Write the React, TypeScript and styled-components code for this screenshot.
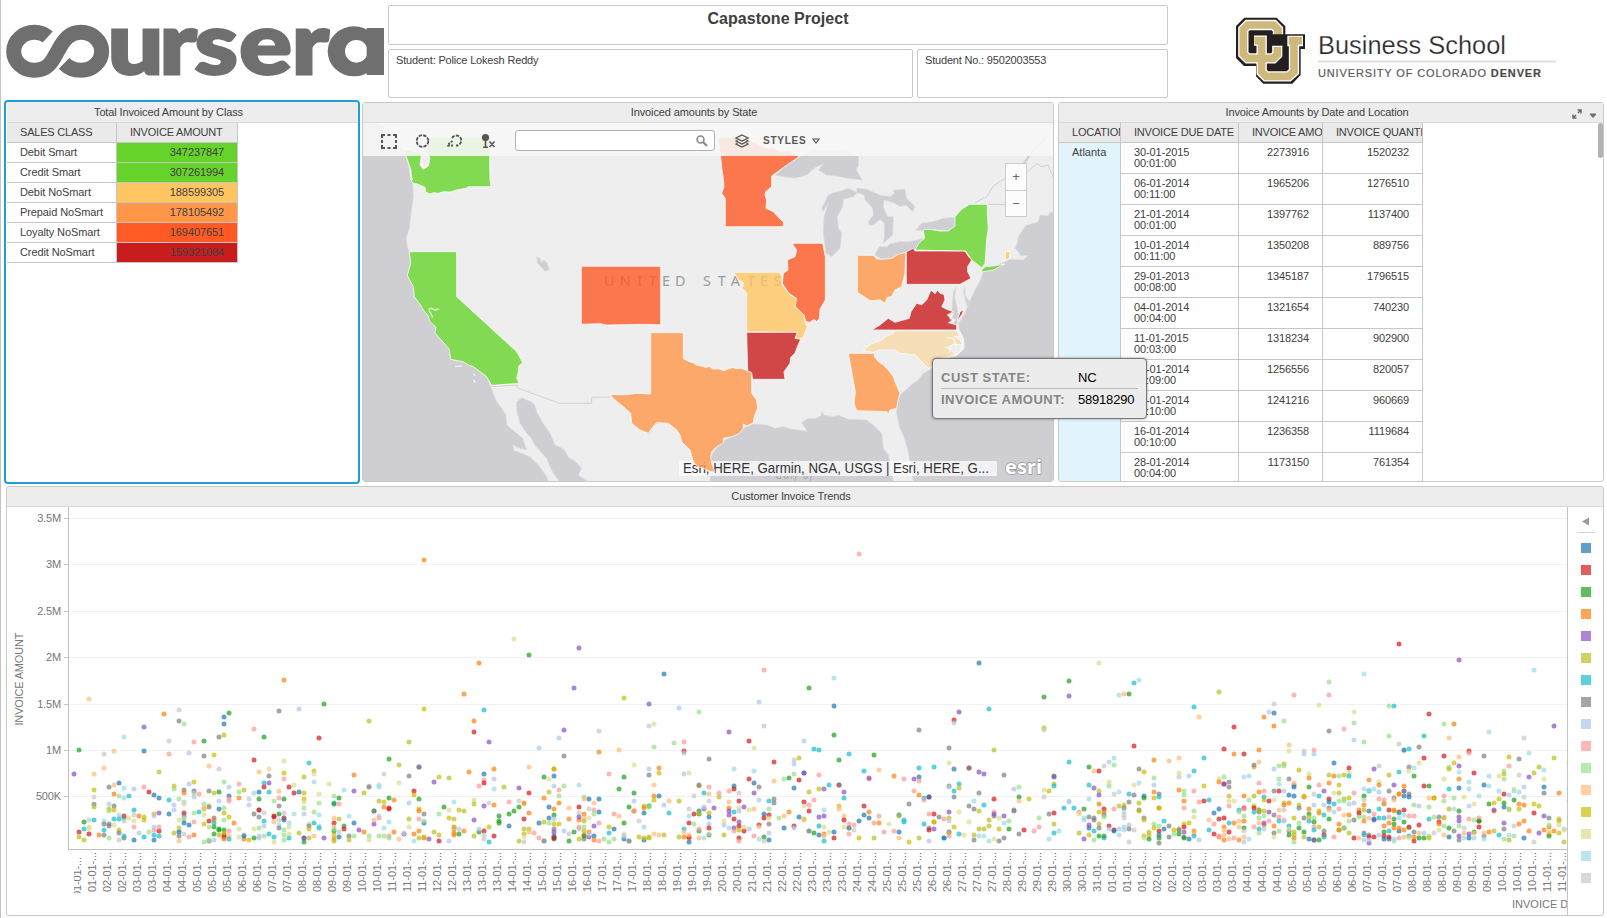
import React from "react";
import styled, { createGlobalStyle } from "styled-components";

const Global = createGlobalStyle`
  * { box-sizing: border-box; }
  html, body { margin: 0; padding: 0; background: #fff; }
  body { font-family: "Liberation Sans", Arial, sans-serif; font-size: 11px; color: #404040; overflow: hidden; }
`;

const Page = styled.div`
  width: 1607px;
  height: 918px;
  border-left: 1px solid #c4c4c4;
  padding-left: 3px;
  display: flex;
  flex-direction: column;
  overflow: hidden;
  background: #fff;
`;

const Header = styled.header`
  display: flex;
  height: 100px;
  flex: none;
`;

const LogoSlot = styled.div<{ $w: number }>`
  width: ${(p) => p.$w}px;
  flex: none;
  svg { display: block; }
`;

const InfoGrid = styled.div`
  width: 780px;
  padding-top: 5px;
  display: grid;
  grid-template-columns: 525px 251px;
  grid-template-rows: 40px 49px;
  gap: 4px;
`;

const InfoBox = styled.div<{ $wide?: boolean }>`
  border: 1px solid #c9c9c9;
  border-radius: 2px;
  grid-column: ${(p) => (p.$wide ? "1 / 3" : "auto")};
  font-size: ${(p) => (p.$wide ? 16 : 11)}px;
  font-weight: ${(p) => (p.$wide ? 700 : 400)};
  letter-spacing: ${(p) => (p.$wide ? 0.03 : -0.18)}px;
  text-align: ${(p) => (p.$wide ? "center" : "left")};
  padding: ${(p) => (p.$wide ? "4px 0 0" : "4px 7px")};
  line-height: ${(p) => (p.$wide ? 18 : 12)}px;
  white-space: nowrap;
`;

const Row = styled.div`
  display: flex;
  align-items: flex-start;
  height: 386px;
  flex: none;
`;

const Panel = styled.section<{ $w: number; $h: number; $ml?: number; $mt?: number }>`
  position: relative;
  width: ${(p) => p.$w}px;
  height: ${(p) => p.$h}px;
  margin-left: ${(p) => p.$ml ?? 0}px;
  margin-top: ${(p) => p.$mt ?? 0}px;
  border: 1px solid #c9c9c9;
  border-radius: 3px;
  flex: none;
  overflow: hidden;
  display: flex;
  flex-direction: column;
`;

const SelectedPanel = styled(Panel)`
  border: 2px solid #1f9fd6;
  border-radius: 4px;
  padding: 0 0 0 1px;
`;

const Title = styled.h2<{ $top?: number }>`
  margin: 0;
  height: ${(p) => 20 + (p.$top ?? 0)}px;
  padding-top: ${(p) => p.$top ?? 0}px;
  padding-right: 28px;
  flex: none;
  background: #ededed;
  border-bottom: 1px solid #dadada;
  text-align: center;
  font-size: 11px;
  font-weight: 400;
  letter-spacing: -0.13px;
  line-height: 19px;
  position: relative;
`;

const TitleTools = styled.div`
  position: absolute;
  right: 5px;
  top: 6px;
  svg { display: block; }
`;

const Grid = styled.div<{ $cols: string }>`
  display: grid;
  grid-template-columns: ${(p) => p.$cols};
  justify-content: start;
`;

const Cell = styled.div<{ $bg?: string; $right?: boolean; $h?: number }>`
  height: ${(p) => p.$h ?? 20}px;
  border-right: 1px solid #c6c6c6;
  border-bottom: 1px solid #c6c6c6;
  background: ${(p) => p.$bg ?? "#fff"};
  text-align: ${(p) => (p.$right ? "right" : "left")};
  padding: 4px ${(p) => (p.$right ? 13 : 0)}px 0 ${(p) => (p.$right ? 0 : 13)}px;
  line-height: 11px;
  letter-spacing: -0.1px;
  white-space: nowrap;
  overflow: hidden;
`;

const HeadCell = styled(Cell)`
  background: #eaeaea;
  letter-spacing: -0.2px;
`;

const TableBody = styled.div`
  display: flex;
  position: relative;
  flex: 1;
  min-height: 0;
  overflow: hidden;
`;

const LocationColumn = styled.div`
  width: 62px;
  display: flex;
  flex-direction: column;
`;

const LocationCell = styled.div`
  flex: 1;
  background: #e2f5fe;
  border-right: 1px solid #c6c6c6;
  padding: 4px 13px;
  line-height: 11px;
`;

const ScrollThumb = styled.div`
  position: absolute;
  right: 0;
  top: 0;
  width: 5px;
  height: 35px;
  border-radius: 3px;
  background: #b2b2b2;
`;

const MapBody = styled.div`
  position: relative;
  flex: 1;
  background: #eee;
  overflow: hidden;
  > svg { display: block; }
`;

const Toolbar = styled.div`
  position: absolute;
  inset: 0 0 auto 0;
  height: 33px;
  background: rgba(248, 248, 248, 0.87);
  display: flex;
  align-items: center;
  padding: 2px 0 0 18px;
  svg { display: block; flex: none; }
`;

const Tool = styled.span<{ $ml: number }>`
  margin-left: ${(p) => p.$ml}px;
`;

const Search = styled.div`
  width: 200px;
  height: 21px;
  margin: 0 20px 0 19px;
  border: 1px solid #b0b0b0;
  border-radius: 3px;
  background: #fff;
  display: flex;
  align-items: center;
  justify-content: flex-end;
  padding-right: 6px;
`;

const StylesLabel = styled.span`
  margin: 0 6px 0 14px;
  font-size: 10px;
  font-weight: 700;
  letter-spacing: 0.75px;
  color: #5a5a5a;
`;

const ZoomControl = styled.div`
  position: absolute;
  left: 642px;
  top: 40px;
  width: 22px;
  border: 1px solid #ccc;
  background: rgba(255, 255, 255, 0.82);
`;

const ZoomButton = styled.div`
  height: 26px;
  line-height: 26px;
  text-align: center;
  font-size: 13px;
  color: #666;
  & + & { border-top: 1px solid #ccc; }
`;

const Tooltip = styled.div`
  position: absolute;
  left: 932px;
  top: 358px;
  width: 215px;
  height: 61px;
  background: #ececec;
  border: 1px solid #777;
  border-radius: 4px;
  box-shadow: 0 0 3px rgba(0, 0, 0, 0.4);
  padding: 7px 8px 0;
`;

const TipRow = styled.div`
  display: flex;
  height: 22px;
  align-items: center;
  font-size: 13px;
  letter-spacing: -0.2px;
  color: #000;
  & + & { border-top: 1px solid #bcbcbc; }
`;

const TipLabel = styled.span`
  width: 137px;
  font-weight: 700;
  color: #868686;
  letter-spacing: 0.5px;
  white-space: nowrap;
`;

const ChartBody = styled.div`
  display: flex;
  flex: 1;
  min-height: 0;
  > svg { display: block; flex: none; }
`;

const Legend = styled.div`
  flex: 1;
  border-left: 1px solid #c4c4c4;
  display: flex;
  flex-direction: column;
  align-items: center;
  padding-top: 10px;
`;

const LegendArrow = styled.div`
  width: 18px;
  height: 16px;
  border-bottom: 1px solid #d4d4d4;
  margin-bottom: 10px;
  svg { display: block; margin-left: 5px; }
`;

const Swatch = styled.span<{ $c: string }>`
  width: 10px;
  height: 10px;
  margin-bottom: 12px;
  flex: none;
  background: ${(p) => p.$c};
  opacity: 0.7;
`;

const classRows: [string, string, string][] = [
  ["Debit Smart", "347237847", "#66d32b"],
  ["Credit Smart", "307261994", "#66d32b"],
  ["Debit NoSmart", "188599305", "#ffc561"],
  ["Prepaid NoSmart", "178105492", "#ff9648"],
  ["Loyalty NoSmart", "169407651", "#ff5924"],
  ["Credit NoSmart", "159321084", "#c91c1c"],
];

const dateRows: [string, string, string, string][] = [
  ["30-01-2015", "00:01:00", "2273916", "1520232"],
  ["06-01-2014", "00:11:00", "1965206", "1276510"],
  ["21-01-2014", "00:01:00", "1397762", "1137400"],
  ["10-01-2014", "00:11:00", "1350208", "889756"],
  ["29-01-2013", "00:08:00", "1345187", "1796515"],
  ["04-01-2014", "00:04:00", "1321654", "740230"],
  ["11-01-2015", "00:03:00", "1318234", "902900"],
  ["21-01-2014", "00:09:00", "1256556", "820057"],
  ["13-01-2014", "00:10:00", "1241216", "960669"],
  ["16-01-2014", "00:10:00", "1236358", "1119684"],
  ["28-01-2014", "00:04:00", "1173150", "761354"],
];

const palette: Record<string, string> = {
  b: "#1f77b4", r: "#d41717", g: "#1e9e1e", o: "#ff7f0e", p: "#8b50c4", y: "#bcbd22", c: "#17becf", k: "#7f7f7f",
  l: "#aec7e8", i: "#ff9896", e: "#98df8a", h: "#ffbb78", m: "#c7bd08", v: "#dbdb8d", a: "#9edae5", s: "#c7c7c7",
};

// Each sample is a series key followed by x,y offsets inside its third of the time line.
const samples = [
`p216,882 g231,810 h260,657 h274,882 m274,930 s274,951 k274,973 y274,981 r231,1056 g246,1026 c246,1047 y231,1071 m246,1080 s260,1020 c274,1020 v260,1041 v260,1047 r260,1062 o289,1065 s304,822 h304,864 h333,813 k318,921 b348,909 h333,915 o333,942 e348,948 a362,771 a362,924 a362,954 c377,948 l318,972 k333,978 m318,987 e318,993 m333,990 l391,927 r362,1008 k362,1014 a348,1005 a304,1023 c333,1017 c348,1017 k304,1032 k318,1032 k318,1038 v333,1035 s362,1023 v377,1014 c391,990 s391,1005 o406,1008 v391,1023 i391,1041 c304,1050 m348,1050 k348,1059 k304,1065 e318,1074 s348,1080 k362,1074 c362,1068 b391,1080 l406,1059 c420,1071
p420,741 b420,813 i420,921 r435,936 b450,945 b464,954 m420,1020 m420,1011 m450,1002 l450,1008 p464,999 b450,1080 c450,1065 c464,1068 e435,1056 i450,1050 r464,1053 i464,1041 l450,1041 o479,702 y464,876 s494,783 i494,822 c494,960 b494,1002 l508,975 l508,990 m508,918 e508,927 y508,1059 s523,690 k523,723 e538,732 e523,957 l538,966 v538,972 k538,930 o538,939 v523,1020 r538,999 k538,1008 s538,1014 e538,1020 y523,1044 b538,1029 v523,1050 b523,1056 k523,1068 h523,1083 s538,1062 b552,1035 i552,1071 o567,1065 i567,1026 l552,819 i567,786 l552,912 m567,906 p567,933 e567,939 l567,951 i582,942 e567,999 c582,996
k596,828 g596,783 h611,858 m625,825 k640,771 b655,711 b655,732 m655,765 g669,699 s640,867 e655,906 l669,921 k611,933 m625,939 g640,936 b669,948 i669,957 i669,963 e596,972 v611,975 k611,981 m596,987 h596,984 l640,963 e655,984 b640,987 m655,999 v596,1005 m669,1011 e655,1020 r611,1023 k625,1014 o625,1020 c625,1029 m596,1032 g625,1041 e611,1041 g640,1047 g640,1050 g655,1050 r655,1071 r655,1065 m655,1059 o655,1077 h669,1068 i669,1053 c669,1077 g625,1062 y640,1065 l625,1080 k611,1083 e611,1080 e596,1086 o684,1029 i699,912 e699,936 y713,930 o699,954 s728,957 l728,975 v699,1047 v699,1071 l713,1065 o713,1077 m728,1080 b713,1068
i742,747 r742,840 g772,771 h757,876 v786,867 k786,888 p786,909 c772,909 r772,921 l742,939 b757,936 c786,936 g757,957 k757,990 r757,990 k742,1002 k757,1011 c772,1023 s772,999 v742,1047 e757,1044 l772,1038 l757,1074 e772,1068 g742,1074 l757,1068 c786,1062 c801,1071 v801,1086 e801,963 i816,954 h816,933 k816,978 g816,1002 r801,1008 r801,1011 h801,1026 s816,1020 a816,1035 k816,1044 k816,693 o830,600 v830,843 m830,879 i830,897 r845,921 v860,915 r860,939 g830,957 s830,999 r830,1014 b830,1020 e830,1050 v845,1041 a845,1029 e830,1065 e830,1080 c845,1074 v845,1062 a860,1002 b874,936 l874,687 y874,1059 y889,891 m889,957 v889,966 m889,939 e889,984 l889,1002 b889,1074 g889,1086 p889,1074
c904,849 y918,873 v918,882 a918,906 v933,942 e933,969 e918,996 a933,1005 c918,1029 v904,1032 k904,1038 m904,1047 a933,1038 c933,1044 h918,1068 y904,1074 g948,672 r933,774 v962,912 p948,1074 e977,948 g991,954 c977,969 g977,972 i991,972 a1006,930 h977,1014 y991,1017 r977,1029 a1020,1008 h977,1041 g977,1053 e977,1047 m977,1065 g1006,1038 r1006,1047 l991,1056 b991,1071 o977,1077 y977,1083 k1020,1068 y1020,1080 o1035,885 p1035,933 y1064,939 b1035,1029 e1035,1068 p1050,1050 o1064,1056 y1079,723 s1079,918 k1079,921 a1108,915 a1108,921 g1093,993 k1093,993 y1108,963 m1123,966 o1123,981 p1093,1032 h1093,1020 i1108,1014 s1108,1008 e1079,1068 v1079,1080 e1108,1068 e1123,1068 a1123,1044
s1123,882 g1138,837 g1138,954 o1152,960 r1138,984 r1138,987 a1138,1026 i1138,1068 o1152,1056 e1138,1074 y1167,855 v1167,909 h1167,1077 p1182,1062 s1182,1059 k1196,888 y1196,786 l1196,969 y1196,1017 v1196,1041 a1211,1083 r1211,933 m1211,945 p1226,861 k1226,861 g1226,957 m1226,987 o1226,993 k1240,1002 i1226,1017 b1240,1029 e1240,1023 o1211,1062 o1226,1053 y1226,1074 o1240,1074 m1240,1071 m1240,687 o1240,240 p1255,1077 y1269,1056 p1269,906 m1284,891 e1284,1002 y1284,1065 r1284,1083 g1299,981 y1313,894 v1313,990 m1313,1014 l1313,1083 y1328,1017 a1328,966 m1342,990 l1342,1047 o1328,1041 y1328,1047 o1328,1059 o1328,1065 g1342,1062 y1357,993 o1357,1053 o1357,642 o1372,876 o1386,723 r1386,756 o1401,549 c1415,690 p1430,786
b1415,882 i1401,918 i1415,900 r1415,909 o1445,867 l1445,897 a1445,927 v1386,960 y1386,972 p1415,978 s1430,969 o1445,975 p1386,1020 y1386,1068 g1401,1056 l1401,1047 r1415,1053 m1430,1041 s1415,1065 s1415,1077 c1430,1086 r1445,1068 g1459,1008 g1459,1023 g1459,1029 y1474,921 i1489,966 g1489,1002 b1489,1038 g1503,993 v1503,477 p1518,924 s1518,963 g1518,981 y1518,1083 v1533,972 o1533,969 r1533,1017 y1533,1047 y1533,1062 v1533,1071 s1533,1086 g1547,525 h1547,861 r1547,939 o1547,999 y1547,1047 h1547,1056 i1562,1059`,
`i8,1074 b8,1029 l8,804 g23,891 o23,954 m23,1026 l23,1083 k23,1083 v37,897 y37,936 b37,981 b37,1014 e37,1029 o52,867 m52,867 b52,888 l52,918 o52,987 g52,1005 l52,1017 m52,1032 k52,1047 p52,1056 b52,1068 k52,1071 g52,1077 r52,1074 e66,948 i66,930 o66,969 m66,1032 l66,774 p81,750 k81,828 e81,918 l81,1053 s96,1062 g96,1083 h96,984 o96,1017 g110,1056 p110,624 p125,504 a125,915 r125,981 s125,999 o125,1020 p125,1011 l125,1047 i125,1041 m125,1077 e140,951 h140,957 o140,1002 h140,1014 y140,1023 e140,1041 m140,1053 o140,1065 k140,1077 g140,1068 b154,957 s154,987 v154,1014 o154,1056 p154,1071 l154,1062 h169,969 i169,990 e169,1002 p169,1038 b169,1068 o169,1080
s184,753 o184,816 b184,957 b184,996 i184,1029 i184,1083 e198,1077 i213,882 g242,927 h242,810 g257,891 m257,654 e213,1086 m213,1041 c213,1059 b228,1047 e228,1077 i228,1002 h242,1008 g257,1029 v257,1062 b257,1077 l257,1068 g272,981 l272,1083 k272,1083 v286,855 g286,939 l286,963 r286,993 h286,993 s301,1023 y301,1071 a315,1041 m315,978 o315,984 b315,999 b315,1080 m315,1074 p330,672 s330,738 l330,867 k330,885 g330,978 e330,981 m330,1071 y330,1074 v345,732 e345,801 h345,915 o345,948 m345,960 h345,1062 m360,879 o360,864 b360,948 h360,1065 b374,582 l374,975 y374,1065 h389,963 c389,999 e403,789
l418,684 y418,963 y418,1071 i433,786 r433,813 l433,819 l433,882 c433,1047 h433,1056 o433,1071 v447,879 s447,987 a447,1008 r447,1029 o447,1074 r447,1071 b447,1086 h447,1065 s462,948 r462,1002 e462,1032 e476,696 m476,918 k476,915 b476,993 g476,1002 g476,1053 i476,1047 h476,1074 y476,999 c491,939 k491,987 l491,981 a491,1074 k506,837 i506,921 h506,942 s506,963 m506,999 b506,1011 l506,1032 r506,1044 g506,1065 s506,1062 p520,984 i535,939 y535,951 v550,1023 l550,1035 y550,1065 p564,756 i564,933 h564,966 o564,984 p564,993 p564,1005 a564,1044 a579,867 b579,918 r579,927 c579,996 r579,1017 p579,1044 i579,1053 s594,939 r594,963 v594,984 l594,993 p594,1026 r594,1038 m594,1050 r594,1074 i594,1083 p608,981 r608,1053 v608,1041
r623,783 r623,897 v623,990 l623,1047 v637,804 a637,873 b637,909 p637,939 h637,987 i637,1068 l652,666 k652,921 l652,960 r652,1035 v652,1041 a652,1077 i667,570 s667,738 b667,1002 r667,1014 g667,1071 s667,1083 c681,963 e681,987 r681,1005 v681,1014 k681,1032 l681,1059 b681,1080 r696,846 h696,903 k696,957 k696,969 e711,1014 e725,897 h725,1008 b725,1044 g740,894 o740,996 s755,840 l755,852 e755,882 b755,924 r755,1038 l755,1044 m769,834 r769,900 b769,1011 l784,783 b784,879 p784,879 r784,966 v784,978 m784,1017 h784,1020 g798,624 y798,936 i798,975 r798,993 e798,1053 k798,1053 c813,807 i813,960 g813,1059 c828,810 i828,885 m828,927 p828,1011 c828,1038 b828,1065
p842,927 a842,990 p842,1008 v842,1041 o842,1062 h842,1068 c842,1083 c857,915 v857,1056 a872,594 b872,678 g872,765 b872,1056 r872,1074 g886,840 r886,915 k886,915 m886,978 h886,987 p901,936 c901,954 h901,1008 r901,1020 v901,1041 c915,822 i915,1032 c915,1044 i915,1062 k915,1044 i930,1035 s930,1050 i945,222 b945,1023 m945,1074 c959,873 r959,978 b959,1005 i974,897 p974,894 o974,996 b974,1014 g989,825 i989,1029 y989,1074 h1003,870 i1003,1008 o1003,1029 i1018,1056 v1032,1032 o1047,888 i1047,1053 b1062,1005 y1062,1008 b1062,1056 h1062,1074 i1076,897 c1076,1020 c1076,1026 k1091,972 m1091,1086 p1106,897 i1106,933 k1120,750 c1120,864 b1120,891 i1120,903 o1120,945 y1120,1074 c1135,954 i1135,960 c1135,1032 r1150,951 b1150,951 i1150,1002 k1150,1044 r1150,1050 l1150,1083 c1164,861 r1164,1002 o1164,1026 m1164,1026 p1164,1047 k1179,1011 i1193,1017 c1193,1074 b1193,1074
k1208,804 v1208,849 k1208,918 l1208,921 p1208,996 y1208,1014 s1208,1023 p1208,1056 y1208,1059 i1208,1068 r1222,720 l1222,729 b1222,867 c1222,933 k1222,951 m1222,1041 p1237,696 c1237,912 m1237,924 v1237,996 c1237,1062 v1252,1065 r1266,864 k1266,864 k1266,978 v1266,1026 a1281,963 k1281,987 y1281,1065 k1281,1080 b1296,549 p1296,876 k1296,939 y1296,993 y1296,1047 a1296,1068 p1310,882 c1310,975 y1310,1047 a1310,1068 c1325,687 y1325,1020 y1325,1038 a1325,1083 y1340,810 r1340,957 i1340,996 k1340,1008 p1340,1002 v1340,1077 v1354,1014 m1354,1047 k1354,1083 k1369,885 p1369,1008 a1369,1029 k1369,1074 g1384,1047 e1384,1023 l1398,927 k1398,990 k1398,993 e1413,921 g1413,951 h1413,963 k1413,1062 r1427,1050 m1442,957 i1457,1053 i1471,1041 e1471,1014 g1486,651 m1486,744 s1486,750 v1486,930 s1486,951 k1500,1002 m1500,933 a1500,1077 g1515,888 p1515,891 m1515,912 c1515,918 r1515,999 y1515,1032 c1515,1059 a1530,1053 c1544,984 g1559,603 p1559,648 c1559,846 a1559,963 l1559,966`,
`c5,984 i20,996 v20,1002 y20,1059 g35,987 a35,1014 a35,1020 p35,1077 g49,861 c49,915 a49,957 p49,1035 k49,1011 b49,1044 m49,1065 h64,873 p64,924 k64,1014 k64,1020 c64,1053 e64,1080 v79,549 r79,873 y79,933 p79,945 o79,972 m79,996 y79,1032 k79,1044 g79,1068 s93,858 r93,987 o93,996 k93,1005 e93,1011 c93,1074 g93,1068 l108,846 v108,906 e108,918 r108,1038 l108,1047 a123,834 e123,855 s123,942 i123,987 r123,1050 b123,1053 a137,645 a137,936 y137,978 a137,1065 l137,1047 h152,642 m152,975 k152,984 a152,996 s152,1005 s152,1014 l152,1041 a152,1050 g167,642 c167,942 k167,966 l167,1035 k167,1047 s167,1086 c181,609 r181,798 v181,915 k181,945 s181,1050 a196,600 k196,867 a196,909 m196,969 k196,990 y196,993
m211,876 b211,948 g211,954 k211,1014 m211,1020 y211,1068 v211,1074 g225,1077 m225,1056 y225,1065 o240,840 e240,894 l240,915 o240,936 m240,954 e240,1032 m240,1044 k254,942 c254,951 o254,984 m254,984 r254,1053 b254,1065 g254,1074 k254,1089 e254,1038 c269,1023 b269,1047 h284,843 k284,1038 k284,1071 h313,834 v313,879 s313,891 o313,930 m298,1050 e298,1062 y313,1047 k313,1050 g313,1062 e328,933 e328,945 o328,963 i328,984 m328,1032 r328,1041 p328,1056 k328,1071 g328,1074 l342,888 m342,1029 b342,1077 c357,681 c357,873 i357,933 e357,993 v357,1011 o357,1053 h357,1062 c357,1068 h372,711 i372,966 l372,1080 c386,834 m386,918 r386,963 c401,960 h401,1020 c401,1050 b416,999 r416,1062 i416,1032
y431,636 v431,897 o431,906 b431,987 r431,1017 o431,1071 i431,1068 r445,807 e445,891 r445,912 p445,912 r445,1014 o445,1041 h445,1050 h445,1065 o445,1080 k460,906 k460,921 y460,948 v460,963 i460,978 c460,1029 r460,1056 h460,1077 r475,741 o475,822 v475,963 o475,1029 i475,1074 c489,990 e489,996 h489,1023 h489,1041 o489,1080 r504,822 a504,891 o504,948 r504,984 i504,987 o504,1023 g504,1044 s504,1053 h504,1071 l504,1086 e504,1008 a518,888 e518,960 a518,1077 m533,861 k533,855 y533,948 m533,978 r533,984 c533,996 i533,1041 o548,810 h548,846 i548,909 o548,936 g548,990 k548,996 y548,990 e548,1014 h548,1029 c548,1047 e548,1059 o562,711 i562,933 c562,951 y562,960 m562,993 e562,1008 o562,1035 p562,1029 l562,1047
l577,696 r577,963 p577,996 i577,1023 s592,672 b592,699 o592,738 l592,867 k592,933 v592,960 k592,1005 o592,1038 k592,1059 v592,1071 e606,858 e606,897 a606,912 r606,933 h606,990 i606,1011 c606,1023 e606,1053 e621,723 m621,852 e621,858 l621,933 y621,969 o621,975 s621,990 i621,1020 l621,1023 h635,795 v635,813 k635,897 b635,945 o635,969 c635,1038 k635,1053 v635,1047 g635,1065 i650,645 k650,915 h650,909 b650,921 b650,948 m650,1014 y650,1056 o650,1074 y650,1065 e650,1086 m665,870 y665,975 k665,984 e665,1029 g665,1044 s680,813 l680,822 o680,951 m680,948 k680,1014 g680,1056 y680,1071 v694,882 o694,894 g694,921 o694,987 g694,1002 c694,1023 m694,1011 b694,1077
i709,810 l709,822 s709,942 l709,975 e709,1014 g709,1026 i709,1041 c709,1050 g709,1080 p709,1080 v724,675 i724,915 c724,948 o724,999 m724,993 y724,1041 g724,1080 p738,933 l738,975 c738,1005 k738,1053 r738,1065 c738,1071 e753,606 i753,645 k753,753 m753,885 o753,909 r753,957 b753,966 k753,984 h753,990 g753,1017 b768,849 o768,888 v768,939 c768,972 a768,996 i768,1071 e782,888 m782,915 y782,939 e782,963 i782,987 o782,1032 m782,1050 o782,1050 i797,747 m797,885 y797,957 e797,963 h797,1005 g797,1044 e797,1044 r812,864 v812,879 c812,888 m812,954 l812,972 o812,1005 e812,1023 y812,1059 v826,696 e826,729 l826,780 i826,939 l826,969 k826,1020 r826,1074 a841,1005 o841,990 r841,999 e841,1011 h841,1074
a856,582 e856,786 a856,927 g856,948 o856,975 m856,990 e856,1011 o856,1023 k856,1059 c856,1065 l856,1080 s856,960 o870,900 c870,933 a870,930 b870,993 h870,1014 k870,1065 r870,1071 p870,1089 l870,1080 p885,867 a885,927 i885,1002 p885,1020 b885,1017 r885,1071 s899,858 v899,906 o899,915 l899,936 i899,957 c899,987 c899,1014 l899,1065 e914,969 o914,972 i914,960 c914,1014 g914,1056 o914,1038 r914,1068 b914,1077 e928,678 e928,768 y928,885 k928,933 r928,990 i928,1011 o928,1029 c928,1053 b928,1077 r928,1071 c943,678 p943,915 k943,954 h943,960 m943,993 o943,990 g943,1017 g943,1032 o943,1044 e943,1083 a943,1077 r958,492 s958,792 c958,876 m958,942 o958,942 r958,996 c958,999 a958,1014 b958,1053 o958,1044 i958,1074
v972,813 b972,810 o972,918 p972,933 k972,933 b972,948 r972,990 a972,1005 g972,1026 o972,1050 h972,1071 c987,807 k987,861 v987,873 k987,942 b987,951 i987,1008 e987,1044 r987,1041 c987,1068 v987,1074 a1001,864 g1001,888 e1001,975 i1001,1008 k1001,1056 r1001,1083 o1001,1071 k1016,801 v1016,849 l1016,978 r1016,1035 h1016,1059 g1016,1074 c1031,768 r1031,834 r1031,918 g1031,1074 l1031,1059 r1045,702 g1045,918 h1045,954 e1045,981 c1045,1017 e1045,1068 m1045,1074 o1060,954 m1060,954 e1060,1011 s1060,1059 k1075,1011 r1075,1026 o1075,1032 v1075,1050 e1089,732 r1089,828 v1089,897 i1089,948 e1089,963 s1089,1011 m1089,1014 e1089,1038 h1089,1065 h1104,774 e1104,861 m1104,867 c1104,927 y1104,987 g1104,1044 b1104,1071 o1119,732 m1119,849 e1119,954 a1119,987 k1119,1053
p1133,540 h1133,831 p1133,858 a1133,876 o1133,897 b1133,924 g1133,993 p1133,1011 p1133,1023 e1133,1038 k1133,1080 p1133,1068 v1148,951 s1148,1044 h1148,1059 a1148,1074 r1162,813 i1162,819 a1162,906 a1162,927 l1162,978 i1162,1017 p1162,1062 b1162,1074 r1177,879 v1177,972 g1177,1056 e1177,1020 h1177,1059 l1177,1074 a1192,948 r1192,1023 i1192,1014 g1192,1023 r1192,1041 k1206,828 b1206,915 k1206,1068 h1206,1059 a1206,1077 a1221,756 a1221,888 a1221,918 g1221,972 o1221,1056 m1236,969 o1236,993 p1236,990 y1236,1053 v1250,888 m1250,957 a1250,933 c1250,1065 e1265,873 m1265,882 g1265,969 r1265,942 b1265,981 p1265,1029 k1265,1047 e1265,1077 e1265,897 m1280,831 i1280,858 l1280,945 y1280,987 e1280,990 a1280,1065 y1280,1080 v1294,927 g1294,960 a1294,933 s1294,1038 e1294,1068
k1309,837 s1309,885 o1309,972 a1309,936 m1309,987 o1309,1032 s1324,774 l1324,921 s1324,951 o1324,975 o1324,1023 b1324,1074 a1338,819 p1338,891 o1338,1053 a1353,570 y1353,879 m1353,972 r1353,999 s1353,1086 y1368,861 m1368,978 p1368,1059 a1382,870 v1382,897 b1382,921 k1382,939 p1382,1008 o1382,1050 k1397,1014 o1397,1041 e1397,1035 m1397,1062 g1397,1068 h1397,1056 p1412,738 y1412,834 o1412,1053 o1426,939 y1426,1017 y1426,1023 v1426,1035 m1426,1059 a1441,1047 v1441,1050 y1441,1086 v1456,849 l1456,927 h1456,963 i1456,1047`,
];

const sectionOrigins = [0, 536, 1072];

const dots = samples.flatMap((text, s) =>
  text.trim().split(/\s+/).map((t) => {
    const [x, y] = t.slice(1).split(",").map(Number);
    const px = sectionOrigins[s] + x / 2.927;
    return { x: 74 + Math.round((px - 74) / 5) * 5 - 7, y: y / 3 - 27, c: palette[t[0]] };
  })
);

const days =
  "01 01 02 02 03 03 04 04 05 05 05 06 06 07 07 08 08 09 09 10 10 11 11 11 12 12 13 13 13 14 14 " +
  "15 15 16 16 17 17 17 18 18 19 19 19 20 20 21 21 22 22 23 23 23 24 24 25 25 25 26 26 27 27 27 28 29 29 29 30 " +
  "30 31 01 01 01 02 02 02 03 03 03 04 04 04 05 05 05 06 06 07 07 07 08 08 08 09 09 09 10 10 10 11 11";

const yTicks: [string, number][] = [
  ["3.5M", 11], ["3M", 57], ["2.5M", 104], ["2M", 150], ["1.5M", 197], ["1M", 243], ["500K", 289],
];

const TrendChart = () => (
  <svg width="1560" height="409" fontFamily="Liberation Sans, Arial, sans-serif" fontSize="11" fill="#777">
    <defs>
      <clipPath id="labels"><rect x="67" y="343" width="1493" height="43" /></clipPath>
    </defs>
    {yTicks.map(([label, y]) => (
      <g key={label}>
        <path d={`M62 ${y + 0.5}H1560`} stroke="#f2f2f2" />
        <path d={`M57 ${y + 0.5}h4`} stroke="#c4c4c4" />
        <text x="54" y={y + 4} textAnchor="end" letterSpacing="-0.15">{label}</text>
      </g>
    ))}
    <path d="M61.5 0V342.5H1560" fill="none" stroke="#c0c0c0" />
    <text transform="translate(16 172) rotate(-90)" textAnchor="middle" textLength="93">INVOICE AMOUNT</text>
    {dots.map((d, i) => (
      <circle key={i} cx={d.x} cy={d.y} r="2.5" fill={d.c} fillOpacity="0.7" />
    ))}
    <g clipPath="url(#labels)">
      {days.split(" ").map((d, i) => (
        <text key={i} transform={`translate(${74 + i * 15.002} ${i ? 345 : 350}) rotate(-90)`} textAnchor="end" textLength="40">
          {d}-01-...
        </text>
      ))}
    </g>
    <text x="1505" y="401">INVOICE DUE DATE</text>
  </svg>
);

const Coursera = () => (
  <svg width="384" height="100" viewBox="4 0 384 100">
    <g transform="scale(.33333)" fill="none" stroke="#6f6f6f" strokeWidth="45">
      <path d="M143 111C131 100 118 97 103 97A62 57 0 0 0 103 211C150 211 161 174 175 150C193 116 210 97 243 97A62 57 0 0 1 243 211C222 211 205 203 192 190" />
      <path d="M1062 79A79 75 0 1 0 1062 229A79 75 0 1 0 1062 79ZM1069 120A34 34 0 1 1 1069 188A34 34 0 1 1 1069 120Z" fill="#6f6f6f" fillRule="evenodd" stroke="none" />
      <path d="M1126 84V225" strokeWidth="52" />
    </g>
    <g transform="scale(1.14 1)">
      <text x="94.6 140 170.600 209.900 256" y="73.500" fontFamily="Lato" fontWeight="900" fontSize="86" fill="#6f6f6f" stroke="#6f6f6f" strokeWidth="2.800">urser</text>
    </g>
  </svg>
);

const BusinessSchool = () => (
  <svg width="436" height="100" viewBox="1168 0 436 100">
    <g transform="translate(1180 0) scale(.33333)" fill="none" strokeLinejoin="miter">
      <path d="M193 53H290L316 79V103H375V147H362V225L337 251H250L228 229V198H192L168 174V78Z" fill="#231f20" />
      <g stroke="#fff" strokeWidth="31">
        <path d="M294 114V88L281 75H203L190 88V162L203 175H240" />
        <path d="M220 122H245V216L258 229H326L342 215V123H366M322 123H369" />
        <path d="M228 175H280L292 163V137" />
      </g>
      <g stroke="#cfb87c" strokeWidth="23">
        <path d="M294 110V88L281 75H203L190 88V162L203 175H280L292 163V141" />
        <path d="M223 122H245V216L258 229H326L342 215V123M326 122H366" />
      </g>
      <path d="M207 93H275V105H222V158H207ZM263 103H312V128H263ZM265 192H308V140H322V203L312 212H265Z" fill="#231f20" />
    </g>
    <text x="1318" y="54" fontFamily="Liberation Sans, Arial" fontSize="26" fill="#282828" stroke="#fff" strokeWidth=".25" textLength="188" lengthAdjust="spacingAndGlyphs">Business School</text>
    <path d="M1318 61.5H1556" stroke="#dedede" strokeWidth="2" />
    <text x="1318" y="77" fontFamily="Liberation Sans, Arial" fontSize="11" fill="#5c5c5c" stroke="#5c5c5c" strokeWidth=".2" textLength="223">
      UNIVERSITY OF COLORADO <tspan fontWeight="700" fill="#484848">DENVER</tspan>
    </text>
  </svg>
);

const water = "#cfced3";

const StateMap = () => (
  <svg width="690" height="360">
    <g transform="translate(-3 -23) scale(.33333)">
      <g fill={water} stroke="#dcdcdf" strokeWidth="2">
        <path d="M0 69H50L90 90L110 120L130 148L138 168L150 215L158 250L160 290L152 350L148 385L138 415L142 440L148 455L152 490L142 527L160 560L163 590L185 620L205 648L228 682L225 698L268 748L272 778L310 785L340 800L380 830L392 860L410 905L425 925L438 945L440 975L470 1000L488 1015L495 1035L500 1050L480 1045L458 1035L462 1052L490 1062L510 1070L535 1095L560 1130L565 1146H0Z" />
        <path d="M470 905L485 893L500 900L510 903L525 915L530 935L548 968L570 1000L585 1035L612 1048L625 1072L650 1088L665 1105L655 1125L685 1146H600L580 1120L568 1095L560 1075L545 1060L525 1035L512 1012L500 1000L480 970L470 930Z" />
        <path d="M530 470L540 475L545 488L550 480L560 487L568 508L556 514L545 502L532 488Z" />
      </g>
      <path d="M395 860L470 855L475 865L600 910H695V892L750 891M865 1003Q870 1000 878 982Q888 968 900 969H925" fill="none" stroke="#d2d2d4" strokeWidth="3" />
      <g transform="translate(1020 0)" fill={water} stroke="#dcdcdf" strokeWidth="2">
        <path d="M1064 335L1050 338L1045 348L1020 345L1015 365L975 378L965 395L955 410L952 430L945 445L955 455L962 468L985 466L970 480L930 478L905 490L880 500L850 512L842 540L825 570L808 605L795 640L776 670L778 690L790 710L795 745L765 770L715 785L690 810L670 820L655 840L640 850L600 885L590 910L590 940L598 980L612 1012L625 1055L640 1146H1064Z" />
        <path d="M30 1146L32 1070L55 1035L90 1010L130 985L160 972L200 975L225 985L250 980L275 988L295 990L322 994L305 968L325 955L348 955L362 948L366 936L374 946L400 950L415 945L445 958L500 960L525 980L545 1000L550 1045L565 1065L580 1146Z" />
        <path d="M225 225L260 195L298 170L340 150L450 155L475 168V200L468 208L487 240L440 235L410 228L380 225L355 210L370 192L345 203L320 225L285 235L250 230Z" />
        <path d="M445 265L472 278L460 290L430 298L428 320L412 350L415 385L425 400L420 445L395 470L378 460L370 400L372 350L385 310L368 335L365 325L385 285L400 278L415 275Z" />
        <path d="M470 265L500 268L540 285L570 290L583 280L580 270L615 268L620 295L645 320L638 335L618 315L600 320L580 308L552 300L550 320L562 350L580 350L578 405L550 430L553 410V370L540 358L520 375L508 376L505 365L520 345L518 325L495 300L492 285L470 277Z" />
        <path d="M525 465L537 440L560 440L570 432L600 425L630 425L670 415L645 450L617 457L575 475L545 478Z" />
        <path d="M648 390L665 370L700 365L730 355L768 352L765 378L745 393L700 388L670 392Z" />
        <path d="M768 562L764 590L768 610L775 640L772 670L765 680L755 640L760 575Z" />
        <path d="M795 560L795 585L808 605L802 620L790 575Z" />
      </g>
      <g transform="translate(1020 0)" fill="none" stroke="#d0d0d4" strokeWidth="3">
        <path d="M865 313H918M965 232L1010 190L1025 200L1045 195L1058 230M825 308L860 290L880 258L915 235" />
        <path d="M970 193L1000 150L1040 110" strokeWidth="7" />
      </g>
      <text y="558" fontFamily="Noto Sans" fontSize="43" fill="#9a9a9a" x="732 779 832 866 906 945 1029 1073 1112 1161 1199 1241">UNITEDSTATES</text>
      <text x="1246" y="1138" fontFamily="Noto Sans" fontStyle="italic" fontSize="30" fill="#aaa" letterSpacing="4">Gulf of</text>
    </g>
    <rect x="316" y="338" width="318" height="15" fill="#fff" fillOpacity=".72" />
    <text x="320" y="350" fontSize="14" fill="#333" textLength="306" lengthAdjust="spacingAndGlyphs" fontFamily="Liberation Sans, Arial">
      Esri, HERE, Garmin, NGA, USGS | Esri, HERE, G...
    </text>
    <g transform="translate(-3 -23) scale(.33333)" stroke="#fff" strokeWidth="3" fillOpacity=".8" strokeOpacity=".75" strokeLinejoin="round">
      <path fill="#66d32b" d="M205 112H392L389 180L390 240L393 260H325L320 264L290 270L270 276L250 275L235 280L220 278L210 282L197 276L195 262L172 252L158 250L152 235L153 210L146 190L138 168L130 148L185 160L180 195L190 208L205 198L210 175L198 155Z" />
      <path fill="#66d32b" d="M148 455H290V590L470 755L488 788L476 798L475 815L470 835L478 850L395 856L380 830L360 815L340 800L325 795L310 785L272 778L268 748L235 710L225 698L228 682L210 665L205 648L190 630L185 620L163 590L160 560L142 527L152 490Z" />
      <path fill="none" strokeWidth="4" d="M205 628L215 625L225 630L236 627M207 632L212 640L218 652M285 800L305 798M340 822L346 827M340 840L346 848M185 190L190 205L200 200L208 180L205 165M150 210L157 240" />
      <path fill="#ff5924" d="M664 499H902V674L850 673L740 675L720 671L664 673Z" />
      <path fill="#ff9648" d="M872 698H970V776L990 786L1000 788L1010 796L1020 797L1035 802L1050 800L1060 808L1075 806L1092 812L1110 805L1120 803L1130 806L1145 805L1175 818V880L1190 900L1193 925L1183 950L1180 968L1160 978L1150 972L1150 985L1138 1000L1115 1010L1090 1015L1090 1028L1070 1040L1055 1055L1052 1070L1055 1090L1065 1117L1045 1112L1030 1105L1010 1098L1000 1085L990 1050L965 1025L960 1005L950 990L925 970L890 968L875 985L865 1000L840 990L815 970L812 940L790 920L765 900L750 884H800L830 880L872 882Z" />
      <g transform="translate(1020 0)">
        <path fill="#ff5924" d="M53 112H118L122 95L130 112L170 130L200 145L220 142L240 155L265 152L298 170L260 195L240 210L215 228V260L197 275L195 285L200 300L198 325L220 335L238 355L250 365V380H76V295L65 280L72 260L70 235L66 210L62 170Z" />
        <path fill="#ff5924" d="M276 430H368L376 470V600L360 628L358 655L350 665L342 658L330 667L318 665L312 645L285 620L288 595L265 578L247 550L250 520L264 510L262 480L285 470L290 450Z" />
        <path fill="#ffc561" d="M102 517H238L246 530L247 555L270 585L290 595L285 620L312 645L314 665L322 680L308 715H285L293 697L140 695V580L127 565L130 548L115 540Z" />
        <path fill="#c91c1c" d="M140 697H292L285 715L302 718L292 740L285 760L272 772L270 790L252 815L255 838H158L155 818L143 812Z" />
        <path fill="#ff9648" d="M472 466H520L530 476L545 478L575 475L595 463L617 457L615 520L605 560L585 570L575 590L562 592L555 610L540 600L510 602L485 585L472 578Z" />
        <path fill="#c91c1c" d="M619 455L640 445L645 453H795L806 470L815 480L803 500V515L813 535L780 553H619Z" />
        <path fill="#66d32b" d="M645 450L658 428L674 415L670 390L688 388L720 393L745 393L765 378V350L785 328L808 313H862V345L865 385L860 420L858 450L855 490L845 503L815 480L797 453Z" />
        <path fill="#66d32b" d="M843 512L855 500L880 498L915 492L880 510L850 515Z" />
        <path fill="#c91c1c" d="M515 690L540 675L565 655L585 667L628 655L633 635L650 610L665 614L680 600L693 570L705 582L712 570L720 580L732 583L735 600L725 620L740 628L760 635L742 645L758 660L745 668L770 675V690Z" />
        <path fill="#c91c1c" d="M772 662L780 635L792 629L785 645Z" />
        <path fill="#f8d9a8" d="M490 752L510 733L545 720L560 708L580 700L585 692H772L778 710L760 708L780 720L790 735L765 732L745 740L758 755L765 765L725 775L697 800L685 805L645 765L600 760L585 750H540L520 757Z" />
        <path fill="none" strokeWidth="4" d="M775 690L790 718L785 750L765 768M735 742L752 748L748 758M740 713L760 715L770 740M760 640L750 656L765 660L752 668" />
        <path fill="#ff9648" d="M445 760H525L522 768L535 785L550 795L565 810L580 830L585 845L600 880L594 900L590 925L570 930L565 943L560 935L470 932L462 910L466 875Z" />
        <path fill="#ffc561" d="M916 455H930L928 475L916 482Z" />
      </g>
    </g>
    <text x="642" y="351" fontFamily="Noto Sans" fontWeight="700" fontSize="20" fill="#fff" stroke="#999" strokeWidth="1.500" paintOrder="stroke" textLength="37" lengthAdjust="spacingAndGlyphs">esri</text>
  </svg>
);

const ink = "#555";

const MapToolbar = () => (
  <Toolbar>
    <svg width="16" height="16" fill="none" stroke={ink} strokeWidth="2">
      <path d="M1 5V2H4M6.500 2H9.500M12 2H15V5M15 7V10M15 12V15H12M9.500 15H6.500M4 15H1V12M1 10V7" />
    </svg>
    <Tool $ml={18}>
      <svg width="15" height="16"><circle cx="7.500" cy="8" r="5.800" fill="none" stroke={ink} strokeWidth="1.800" strokeDasharray="3.4 1.150" /></svg>
    </Tool>
    <Tool $ml={17}>
      <svg width="16" height="16" fill="none" stroke={ink} strokeWidth="1.800">
        <path d="M5 5A5 5 0 1 1 9 12.500" strokeDasharray="3.4 1.200" />
        <path d="M5.500 8L2 10.500L1 12.500H6" strokeDasharray="2 1.200" />
      </svg>
    </Tool>
    <Tool $ml={18}>
      <svg width="15" height="16">
        <circle cx="4.500" cy="4.500" r="3.600" fill={ink} />
        <path d="M4.500 7V14.500M2 14.300H7M8.500 8.500L13.500 14M13.500 8.500L8.500 14" stroke={ink} strokeWidth="1.600" />
      </svg>
    </Tool>
    <Search>
      <svg width="12" height="12" fill="none" stroke="#888"><circle cx="4.500" cy="4.500" r="3.500" strokeWidth="1.500" /><path d="M7 7L11 11" strokeWidth="2.200" /></svg>
    </Search>
    <svg width="14" height="14" fill="none" stroke={ink} strokeWidth="1.300">
      <path d="M7 1L13 4L7 7L1 4Z" />
      <path d="M2.500 6L1 7L7 10L13 7L11.500 6M2.500 9L1 10L7 13L13 10L11.500 9" />
    </svg>
    <StylesLabel>STYLES</StylesLabel>
    <svg width="8" height="6" fill="none" stroke={ink} strokeWidth="1.200"><path d="M1 1H7L4 5Z" /></svg>
  </Toolbar>
);

export default function App() {
  return (
    <Page>
      <Global />
      <Header>
        <LogoSlot $w={384}><Coursera /></LogoSlot>
        <InfoGrid>
          <InfoBox $wide>Capastone Project</InfoBox>
          <InfoBox>Student: Police Lokesh Reddy</InfoBox>
          <InfoBox>Student No.: 9502003553</InfoBox>
        </InfoGrid>
        <LogoSlot $w={436}><BusinessSchool /></LogoSlot>
      </Header>

      <Row>
        <SelectedPanel $w={356} $h={384}>
          <Title $top={1}>Total Invoiced Amount by Class</Title>
          <Grid $cols="110px 121px">
            <HeadCell>SALES CLASS</HeadCell>
            <HeadCell>INVOICE AMOUNT</HeadCell>
            {classRows.map(([name, amount, color]) => (
              <React.Fragment key={name}>
                <Cell>{name}</Cell>
                <Cell $right $bg={color}>{amount}</Cell>
              </React.Fragment>
            ))}
          </Grid>
        </SelectedPanel>

        <Panel $w={692} $h={380} $ml={2} $mt={2}>
          <Title>Invoiced amounts by State</Title>
          <MapBody>
            <StateMap />
            <MapToolbar />
            <ZoomControl>
              <ZoomButton>+</ZoomButton>
              <ZoomButton>−</ZoomButton>
            </ZoomControl>
          </MapBody>
        </Panel>

        <Panel $w={546} $h={380} $ml={4} $mt={2}>
          <Title>
            Invoice Amounts by Date and Location
            <TitleTools>
              <svg width="26" height="11" fill="#6c6c6c" stroke="#6c6c6c">
                <path d="M5.500 1H9V4.500M8.500 1.500L6 4M1 5.500V9H4.500M1.500 8.500L4 6" fill="none" strokeWidth="1.500" />
                <path d="M18 5H24L21 8.500Z" />
              </svg>
            </TitleTools>
          </Title>
          <TableBody>
            <LocationColumn>
              <HeadCell>LOCATION</HeadCell>
              <LocationCell>Atlanta</LocationCell>
            </LocationColumn>
            <Grid $cols="118px 84px 100px">
              <HeadCell>INVOICE DUE DATE</HeadCell>
              <HeadCell>INVOICE AMOUNT</HeadCell>
              <HeadCell>INVOICE QUANTITY</HeadCell>
              {dateRows.map(([date, time, amount, qty]) => (
                <React.Fragment key={amount}>
                  <Cell $h={31}>{date}<br />{time}</Cell>
                  <Cell $h={31} $right>{amount}</Cell>
                  <Cell $h={31} $right>{qty}</Cell>
                </React.Fragment>
              ))}
            </Grid>
            <ScrollThumb />
          </TableBody>
        </Panel>
      </Row>

      <Panel $w={1598} $h={430} $ml={2}>
        <Title>Customer Invoice Trends</Title>
        <ChartBody>
          <TrendChart />
          <Legend>
            <LegendArrow>
              <svg width="8" height="9"><path d="M0 4.500L7 .500V8.500Z" fill="#999" /></svg>
            </LegendArrow>
            {Object.entries(palette).map(([key, color]) => (
              <Swatch key={key} $c={color} />
            ))}
          </Legend>
        </ChartBody>
      </Panel>

      <Tooltip>
        <TipRow><TipLabel>CUST STATE:</TipLabel>NC</TipRow>
        <TipRow><TipLabel>INVOICE AMOUNT:</TipLabel>58918290</TipRow>
      </Tooltip>
    </Page>
  );
}
